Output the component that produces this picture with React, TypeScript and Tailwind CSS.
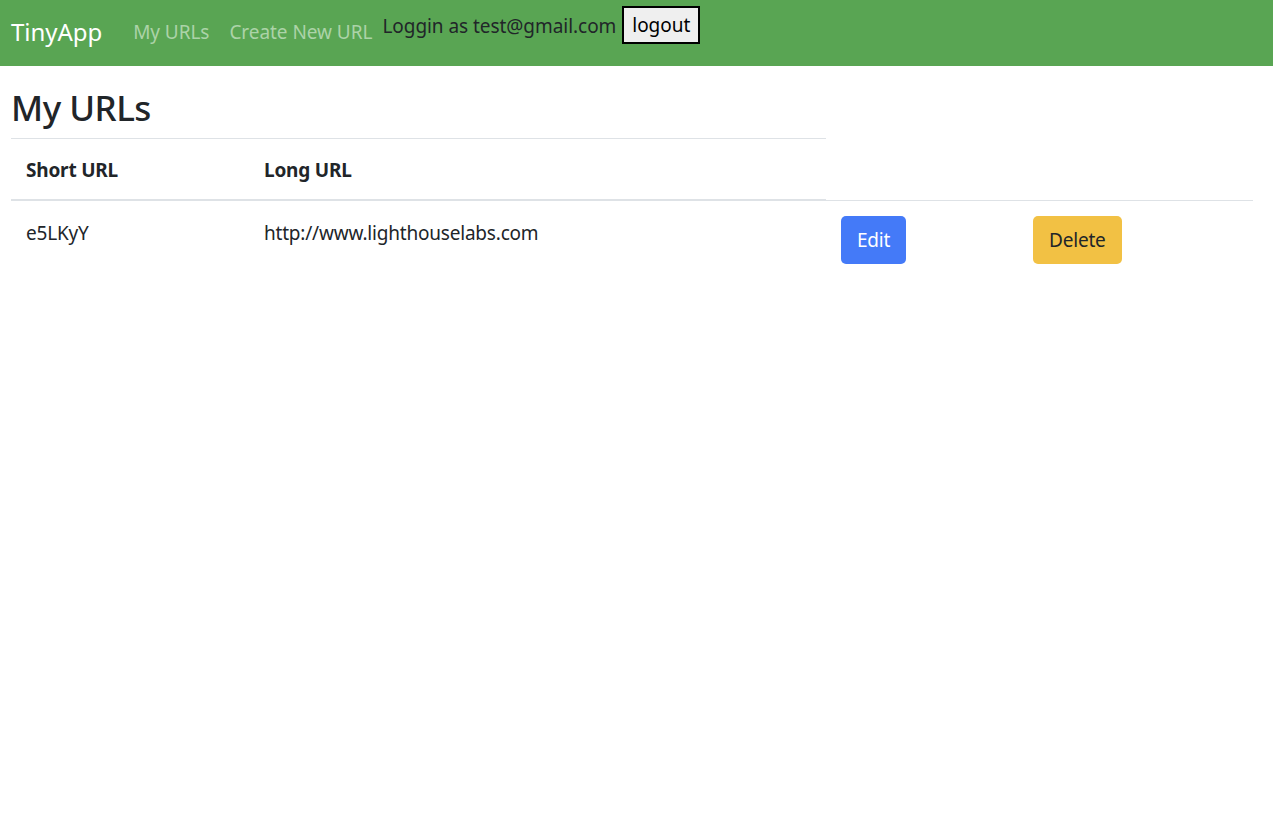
export default function App() {
  const font = { fontFamily: '"Noto Sans", "Open Sans", sans-serif' };
  return (
    <div className="min-h-screen bg-white text-[#212529] tracking-[-0.2px]" style={font}>
      <nav className="h-[66px] bg-[#59a553] flex items-start pl-[11px] tracking-[-0.05px]">
        <span className="mt-[16px] text-[24px] leading-[32px] text-white mr-[21px]">TinyApp</span>
        <a className="mt-[17px] px-[10px] text-[19px] leading-[30px] text-[#acd3a8]">My URLs</a>
        <a className="mt-[17px] px-[10px] text-[19px] leading-[30px] text-[#acd3a8]">Create New URL</a>
        <div className="mt-[6px] flex items-center h-[38px]">
          <span className="text-[19px] leading-[30px] text-[#212529] mt-[2px]">Loggin as test@gmail.com</span>
          <button className="ml-[6px] h-[38px] px-[8px] border-2 border-black bg-[#efefef] text-black text-[19px] leading-[30px]">logout</button>
        </div>
      </nav>
      <div className="pl-[11px] pr-[20px]">
        <h1 className="mt-[18px] mb-[6px] text-[35px] leading-[48px] font-medium tracking-[-0.5px]">My URLs</h1>
        <table className="w-[1242px] border-collapse text-[19px] leading-[30px]">
          <thead>
            <tr>
              <th className="w-[238px] text-left font-bold pl-[15px] pt-[16px] pb-[14px] border-t border-[#dee2e6] border-b-2 border-b-[#dee2e6]">Short URL</th>
              <th className="w-[577px] text-left font-bold pl-[15px] pt-[16px] pb-[14px] border-t border-[#dee2e6] border-b-2 border-b-[#dee2e6]">Long URL</th>
              <th className="w-[192px]"></th>
              <th className="w-[235px]"></th>
            </tr>
          </thead>
          <tbody>
            <tr>
              <td className="pl-[15px] pt-[17px] pb-[13px] align-top border-t border-[#dee2e6]">e5LKyY</td>
              <td className="pl-[15px] pt-[17px] pb-[13px] align-top border-t border-[#dee2e6]">http://www.lighthouselabs.com</td>
              <td className="p-[15px] align-top border-t border-[#dee2e6]">
                <button className="h-[48px] px-[16px] rounded-[5px] bg-[#447af8] text-white text-[19px] leading-[30px]">Edit</button>
              </td>
              <td className="p-[15px] align-top border-t border-[#dee2e6]">
                <button className="h-[48px] px-[16px] rounded-[5px] bg-[#f2c144] text-[#212529] text-[19px] leading-[30px]">Delete</button>
              </td>
            </tr>
          </tbody>
        </table>
      </div>
    </div>
  );
}
